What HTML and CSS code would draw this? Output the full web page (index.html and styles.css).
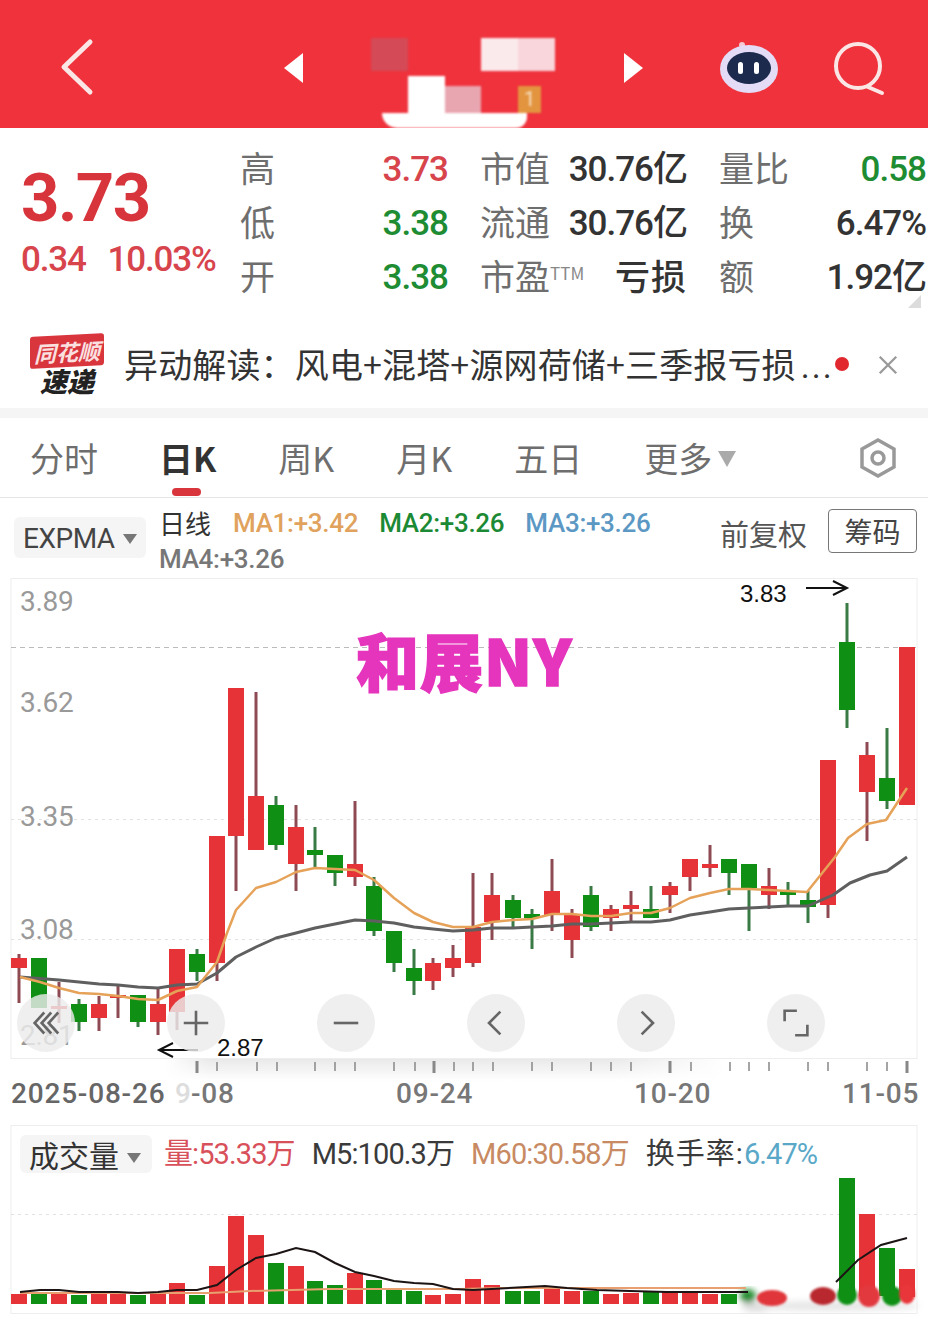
FILE: index.html
```html
<!DOCTYPE html>
<html lang="zh-CN">
<head>
  <meta charset="UTF-8">
  <meta name="viewport" content="width=device-width, initial-scale=1.0">
  <title>行情</title>
  <link rel="stylesheet" href="styles.css">
</head>
<body>

  <header class="topbar">
    <svg class="back-icon" viewBox="0 0 40 60"><path d="M32 4 L6 29 L32 54"/></svg>
    <div class="stock-switch">
      <span class="tri tri-left"></span>
      <div class="mosaic">
        <span class="m m1"></span><span class="m"></span><span class="m"></span><span class="m m2"></span><span class="m m3"></span>
        <span class="m"></span><span class="m m4"></span><span class="m m5"></span><span class="m"></span><span class="m m6">1</span>
        <span class="m-bottom"></span>
      </div>
      <span class="tri tri-right"></span>
    </div>
    <svg class="bot-icon" viewBox="0 0 60 52">
      <circle cx="23" cy="3" r="3" fill="#f6c8d4"/>
      <path d="M23 3 L27 9" stroke="#f6d8e0" stroke-width="2"/>
      <ellipse cx="30" cy="27" rx="29" ry="24" fill="#e4dcf6"/>
      <ellipse cx="30" cy="26" rx="22" ry="16" fill="#1c2a4e"/>
      <rect x="19" y="20" width="5" height="12" rx="2.5" fill="#fff"/>
      <rect x="35" y="20" width="5" height="12" rx="2.5" fill="#fff"/>
    </svg>
    <svg class="search-icon" viewBox="0 0 56 56"><circle cx="26" cy="25" r="22"/><path d="M36 46 L50 52"/></svg>
  </header>

  <section class="quote">
    <div class="price-box">
      <div class="price">3.73</div>
      <div class="change"><span>0.34</span><span>10.03%</span></div>
    </div>
    <div class="quote-grid">
      <div class="cell"><span class="lbl">高</span><span class="val red">3.73</span></div>
      <div class="cell"><span class="lbl">市值</span><span class="val">30.76亿</span></div>
      <div class="cell"><span class="lbl">量比</span><span class="val green">0.58</span></div>
      <div class="cell"><span class="lbl">低</span><span class="val green">3.38</span></div>
      <div class="cell"><span class="lbl">流通</span><span class="val">30.76亿</span></div>
      <div class="cell"><span class="lbl">换</span><span class="val">6.47%</span></div>
      <div class="cell"><span class="lbl">开</span><span class="val green">3.38</span></div>
      <div class="cell"><span class="lbl">市盈<sup class="ttm">TTM</sup></span><span class="val loss">亏损</span></div>
      <div class="cell"><span class="lbl">额</span><span class="val">1.92亿</span></div>
    </div>
    <span class="corner"></span>
  </section>

  <section class="news">
    <div class="news-logo">
      <div class="logo-top">同花顺</div>
      <div class="logo-bottom">速递</div>
    </div>
    <div class="news-text">异动解读：风电+混塔+源网荷储+三季报亏损<span class="dots">...</span></div>
    <span class="news-dot"></span>
    <svg class="news-close" viewBox="0 0 24 24"><path d="M3 3 L21 21 M21 3 L3 21"/></svg>
  </section>

  <nav class="tabs">
    <span class="tab">分时</span>
    <span class="tab active">日K</span>
    <span class="tab">周K</span>
    <span class="tab">月K</span>
    <span class="tab">五日</span>
    <span class="tab">更多<i class="caret caret-big"></i></span>
    <svg class="hex-icon" viewBox="0 0 40 40"><path d="M20 2 L36 11 V29 L20 38 L4 29 V11 Z"/><circle cx="20" cy="20" r="6"/></svg>
  </nav>

  <section class="indicators">
    <div class="pill pill-expma">EXPMA<i class="caret"></i></div>
    <div class="ma-list">
      <span class="ma-day">日线</span>
      <span class="ma ma1">MA1:+3.42</span>
      <span class="ma ma2">MA2:+3.26</span>
      <span class="ma ma3">MA3:+3.26</span>
      <span class="ma ma4">MA4:+3.26</span>
    </div>
    <span class="fq">前复权</span>
    <span class="chip">筹码</span>
  </section>

  <section class="chart">
    <svg class="chart-svg" viewBox="0 578 928 532" width="928" height="532">
      <defs>
        <linearGradient id="axisFade" x1="0" y1="0" x2="0" y2="1">
          <stop offset="0" stop-color="#e9e9e9"/>
          <stop offset="1" stop-color="#e9e9e9" stop-opacity="0"/>
        </linearGradient>
        <linearGradient id="axisEdge" x1="0" y1="0" x2="1" y2="0">
          <stop offset="0" stop-color="#000"/>
          <stop offset="0.08" stop-color="#fff"/>
          <stop offset="0.8" stop-color="#fff"/>
          <stop offset="1" stop-color="#000"/>
        </linearGradient>
        <mask id="axisMask" maskUnits="userSpaceOnUse" x="165" y="1059" width="560" height="22">
          <rect x="165" y="1059" width="560" height="22" fill="url(#axisEdge)"/>
        </mask>
      </defs>

      <rect x="165" y="1059" width="560" height="22" fill="url(#axisFade)" mask="url(#axisMask)"/>
      <rect class="frame" x="11" y="578.5" width="906" height="480"/>

      <path class="grid-dash" d="M11 647.5H917"/>
      <path class="grid-dot" d="M11 819.5H917M11 939.5H917"/>

      <text class="y-label" x="20" y="611">3.89</text>
      <text class="y-label" x="20" y="712">3.62</text>
      <text class="y-label" x="20" y="826">3.35</text>
      <text class="y-label" x="20" y="939">3.08</text>
      <text class="y-label" x="20" y="1045">2.81</text>

      <text class="watermark" x="356" y="686">和展NY</text>

      <path class="wick wick-up" d="M19 954V1003M59 982V1023M99 996V1031M118 986V1018M158 989V1035M177 1012V1030M217 963V981M236 836V891M256 692V796M296 805V891M355 801V886M433 958V990M453 945V977M473 873V967M492 873V940M552 859V931M572 909V958M611 905V931M631 891V922M670 882V913M690 877V891M710 845V877M769 868V909M828 905V918M867 742V841"/>
      <path class="wick wick-down" d="M79 999V1031M138 1022V1027M197 949V981M276 796V850M315 827V867M335 873V886M374 877V936M394 963V972M414 949V995M513 895V927M532 909V949M591 886V931M651 886V918M729 873V895M749 888V931M788 882V906M808 891V923M847 603V728M887 728V809"/>
      <path class="body-up" d="M11 958h16v10h-16zM51 1006h16v3h-16zM91 1004h16v14h-16zM110 995h16v3h-16zM150 1004h16v18h-16zM169 949h16v63h-16zM209 836h16v127h-16zM228 688h16v148h-16zM248 796h16v54h-16zM288 827h16v37h-16zM347 864h16v13h-16zM425 963h16v18h-16zM445 958h16v10h-16zM465 927h16v36h-16zM484 895h16v27h-16zM544 891h16v24h-16zM564 915h16v25h-16zM603 909h16v9h-16zM623 905h16v4h-16zM662 886h16v9h-16zM682 859h16v18h-16zM702 864h16v4h-16zM761 886h16v9h-16zM820 760h16v145h-16zM859 755h16v37h-16zM899 647h16v158h-16z"/>
      <path class="body-down" d="M31 958h16v50h-16zM71 1004h16v18h-16zM130 995h16v27h-16zM189 954h16v18h-16zM268 805h16v40h-16zM307 850h16v5h-16zM327 855h16v18h-16zM366 886h16v45h-16zM386 931h16v32h-16zM406 968h16v13h-16zM505 900h16v18h-16zM524 914h16v4h-16zM583 895h16v32h-16zM643 909h16v9h-16zM721 859h16v14h-16zM741 864h16v24h-16zM780 891h16v4h-16zM800 900h16v7h-16zM839 642h16v68h-16zM879 778h16v23h-16z"/>

      <polyline class="line-gray" points="20,977 59,980 79,982 99,984 118,985 138,987 158,988 177,985 197,984 217,973 236,957 256,947 276,938 296,933 315,928 335,924 355,920 374,921 394,923 414,927 433,929 453,931 473,930 492,928 513,928 532,927 552,926 572,924 591,924 611,923 631,922 651,922 670,920 690,915 710,912 729,909 749,908 769,907 788,906 808,906 833,895 850,883 870,875 887,871 907,857"/>
      <polyline class="line-orange" points="20,977 40,982 59,988 79,993 99,994 118,996 138,999 158,1000 177,991 197,987 217,962 227,933 236,910 256,888 276,882 296,872 315,868 335,869 355,870 374,880 394,898 414,913 433,922 453,927 473,927 492,922 513,920 532,919 552,914 572,914 591,916 611,916 631,913 651,913 670,908 690,898 710,893 729,889 749,889 769,890 788,891 807,892 835,857 848,838 867,824 886,820 907,788"/>

      <text class="note" x="740" y="602">3.83</text>
      <path class="note-arrow" d="M806 588H847M833 581L847 588L833 595"/>
      <text class="note" x="217" y="1056">2.87</text>
      <path class="note-arrow" d="M198 1050H159M173 1043L159 1050L173 1057"/>

      <path class="tick" d="M217 1062v9M257 1062v9M277 1062v9M315 1062v9M335 1062v9M355 1062v9M394 1062v9M415 1062v9M454 1062v9M473 1062v9M493 1062v9M532 1062v9M552 1062v9M591 1062v9M611 1062v9M631 1062v9M691 1062v9M730 1062v9M749 1062v9M769 1062v9M808 1062v9M828 1062v9M867 1062v9M887 1062v9"/>
      <path class="tick tick-major" d="M197 1061v12M434 1061v12M670 1061v12M907 1061v12"/>

      <text class="x-label x-first" x="11" y="1103">2025-08-26</text>
      <text class="x-label x-faded" x="175" y="1103">9</text>
      <text class="x-label" x="191" y="1103">-08</text>
      <text class="x-label" x="396" y="1103">09-24</text>
      <text class="x-label" x="634" y="1103">10-20</text>
      <text class="x-label" x="842" y="1103">11-05</text>
    </svg>

    <div class="chart-tools">
      <button class="tool"><svg viewBox="0 0 32 32"><path d="M14 4 L3 16 L14 28M22 4 L11 16 L22 28M30 4 L19 16 L30 28"/></svg></button>
      <button class="tool"><svg viewBox="0 0 32 32"><path d="M2 16H30M16 2V30"/></svg></button>
      <button class="tool"><svg viewBox="0 0 32 32"><path d="M2 16H30"/></svg></button>
      <button class="tool"><svg viewBox="0 0 32 32"><path d="M21 3 L8 16 L21 29"/></svg></button>
      <button class="tool"><svg viewBox="0 0 32 32"><path d="M11 3 L24 16 L11 29"/></svg></button>
      <button class="tool"><svg viewBox="0 0 32 32"><path d="M17 2H3V14M15 30H29V18"/></svg></button>
    </div>
  </section>

  <section class="volume">
    <div class="vol-head">
      <div class="pill pill-vol">成交量<i class="caret"></i></div>
      <span class="vol-item v-red">量:53.33万</span>
      <span class="vol-item v-dark">M5:100.3万</span>
      <span class="vol-item v-tan">M60:30.58万</span>
      <span class="vol-item v-dark v-turn">换手率:<span class="v-blue">6.47%</span></span>
    </div>
    <svg class="vol-svg" viewBox="0 1125 928 189" width="928" height="189">
      <defs><filter id="smear"><feGaussianBlur stdDeviation="3"/></filter></defs>
      <rect class="frame" x="11" y="1125.5" width="906" height="188"/>
      <path class="grid-dot" d="M11 1214.5H917"/>
      <path class="body-up" d="M11 1294h16v10h-16zM51 1294h16v10h-16zM91 1294h16v10h-16zM110 1294h16v10h-16zM150 1292h16v12h-16zM169 1283h16v21h-16zM209 1266h16v38h-16zM228 1216h16v88h-16zM248 1235h16v69h-16zM288 1266h16v38h-16zM347 1273h16v31h-16zM425 1295h16v9h-16zM445 1294h16v10h-16zM465 1279h16v25h-16zM484 1285h16v19h-16zM544 1288h16v16h-16zM564 1291h16v13h-16zM603 1294h16v10h-16zM623 1293h16v11h-16zM662 1292h16v12h-16zM682 1293h16v11h-16zM702 1294h16v10h-16zM859 1214h16v82h-16zM899 1269h16v28h-16z"/>
      <path class="body-down" d="M31 1292h16v12h-16zM71 1295h16v9h-16zM130 1295h16v9h-16zM189 1295h16v9h-16zM268 1263h16v41h-16zM307 1281h16v23h-16zM327 1285h16v19h-16zM366 1280h16v24h-16zM386 1289h16v15h-16zM406 1291h16v13h-16zM505 1291h16v13h-16zM524 1291h16v13h-16zM583 1291h16v13h-16zM643 1292h16v12h-16zM721 1294h16v10h-16zM839 1178h16v118h-16zM879 1248h16v48h-16z"/>
      <g filter="url(#smear)">
        <ellipse cx="830" cy="1306" rx="90" ry="5" fill="#e6e6e6"/>
        <ellipse cx="756" cy="1307" rx="14" ry="5" fill="#ddd"/>
        <ellipse cx="748" cy="1296" rx="8" ry="7" fill="#1a8a2a"/>
      </g>
      <ellipse class="blob" cx="772" cy="1298" rx="15" ry="8" fill="#e0353a"/>
      <ellipse class="blob" cx="823" cy="1296" rx="13" ry="9" fill="#b8282e"/>
      <circle class="blob" cx="847" cy="1295" r="10" fill="#0f9015"/>
      <circle class="blob" cx="869" cy="1296" r="11" fill="#e2393f"/>
      <circle class="blob" cx="892" cy="1296" r="10" fill="#0f9015"/>
      <ellipse class="blob" cx="907" cy="1294" rx="8" ry="10" fill="#e8363a"/>
      <polyline class="vol-ma60" points="20,1293 210,1293 250,1291 330,1289 460,1289 500,1288 746,1288"/>
      <polyline class="vol-ma5" points="20,1292 40,1290 59,1290 79,1292 99,1292 118,1292 138,1293 158,1292 177,1290 197,1290 217,1285 236,1270 256,1258 276,1254 296,1248 315,1252 335,1263 355,1272 374,1276 394,1281 414,1283 433,1284 453,1289 473,1290 545,1286 567,1288 597,1290 630,1291 667,1292 730,1292 748,1292"/>
      <polyline class="vol-ma5" points="836,1282 858,1260 881,1245 907,1238"/>
    </svg>
  </section>

</body>
</html>
```

FILE: styles.css
```css
body {
  margin: 0;
  width: 928px;
  height: 1322px;
  overflow: hidden;
  background-color: #fff;
  font-family: "Noto Sans CJK SC", "Noto Sans", sans-serif;
  color: #333;
}

/* top bar */
.topbar {
  height: 128px;
  background-color: #ef323c;
  display: flex;
  align-items: center;
  position: relative;
}
.back-icon {
  width: 40px;
  height: 60px;
  margin: 8px 0 0 58px;
  fill: none;
  stroke: #fbe6e6;
  stroke-width: 5;
  stroke-linecap: round;
  stroke-linejoin: round;
}
.stock-switch {
  display: flex;
  align-items: center;
  margin-left: 186px;
  height: 100%;
}
.tri {
  width: 0;
  height: 0;
  margin-top: 8px;
  border-top: 15px solid transparent;
  border-bottom: 15px solid transparent;
}
.tri-left { border-right: 19px solid #fff; }
.tri-right { border-left: 19px solid #fff; margin-left: 69px; }
.mosaic {
  width: 184px;
  height: 127px;
  margin-left: 68px;
  padding-top: 37px;
  box-sizing: border-box;
  display: grid;
  grid-template-columns: repeat(5, 36.8px);
  grid-template-rows: 33px 42px 15px;
  filter: blur(1.2px);
}
.m1 { background-color: #d44a56; }
.m2 { background-color: #fbeaec; }
.m3 { background-color: #f9d6dc; }
.m4 { background-color: #fff; margin-top: 5px; }
.m5 { background-color: #e8a6b0; margin-top: 15px; }
.m6 {
  background-color: #e3943f;
  margin-top: 15px;
  margin-right: 14px;
  color: #f6e2c4;
  font: 20px/27px "Roboto", sans-serif;
  text-align: center;
}
.m-bottom {
  grid-column: 1 / 6;
  margin: 0 28px 0 11px;
  background-color: #fff;
  border-radius: 0 0 22px 30px;
}
.bot-icon {
  width: 60px;
  height: 52px;
  position: absolute;
  left: 719px;
  top: 42px;
}
.search-icon {
  width: 56px;
  height: 56px;
  position: absolute;
  left: 832px;
  top: 41px;
  fill: none;
  stroke: #fbe6e6;
  stroke-width: 4;
  stroke-linecap: round;
}

/* quote */
.quote {
  height: 202px;
  display: flex;
  position: relative;
}
.price-box {
  width: 240px;
  padding-left: 21px;
  box-sizing: border-box;
}
.price {
  font: 700 67px/80px "Roboto", sans-serif;
  color: #d8343c;
  margin-top: 30px;
  letter-spacing: -1.5px;
}
.change {
  display: flex;
  gap: 22px;
  margin-top: 1px;
  font: 500 35px/42px "Roboto", sans-serif;
  color: #d8444c;
  letter-spacing: -1.2px;
}
.quote-grid {
  flex: 1;
  display: grid;
  grid-template-columns: 208px 207px 207px;
  column-gap: 32px;
  grid-auto-rows: 54px;
  margin-top: 13px;
}
.cell {
  display: flex;
  justify-content: space-between;
  align-items: center;
}
.lbl {
  font-size: 35px;
  color: #6e6e6e;
  line-height: 54px;
  margin-top: -3px;
  white-space: nowrap;
}
.ttm {
  font-size: 17px;
  line-height: 0;
  vertical-align: 10px;
  color: #888;
}
.val {
  font: 500 35px/54px "Roboto", "Noto Sans CJK SC", sans-serif;
  letter-spacing: -1px;
  color: #333;
  margin-top: 3px;
  white-space: nowrap;
}
.val.red { color: #d8444c; }
.val.green { color: #1e8c32; }
.val.loss {
  font-family: "Noto Sans CJK SC", sans-serif;
  font-size: 35px;
  font-weight: 500;
  letter-spacing: 1px;
  margin-top: -3px;
}
.corner {
  position: absolute;
  right: 7px;
  bottom: 22px;
  width: 0;
  height: 0;
  border-left: 13px solid transparent;
  border-bottom: 13px solid #dcdcdc;
}

/* news strip */
.news {
  height: 88px;
  box-sizing: border-box;
  padding-bottom: 8px;
  border-bottom: 10px solid #f5f5f5;
  display: flex;
  align-items: center;
}
.news-logo {
  width: 74px;
  margin-left: 30px;
  text-align: center;
  font-style: italic;
  font-weight: 700;
}
.logo-top {
  background-color: #d8353d;
  color: #fbe0e0;
  font-size: 22px;
  line-height: 32px;
  border-radius: 3px;
  transform: skewY(-3deg);
}
.logo-bottom {
  font-size: 27px;
  font-weight: 900;
  line-height: 28px;
  color: #222;
}
.news-text {
  margin-left: 20px;
  width: 708px;
  font-size: 34px;
  line-height: 44px;
  color: #333;
  letter-spacing: 0.15px;
  white-space: nowrap;
}
.dots {
  font-family: "Roboto", sans-serif;
  letter-spacing: 2px;
  margin-left: 5px;
}
.news-dot {
  width: 14px;
  height: 14px;
  border-radius: 50%;
  background-color: #e0282e;
  margin-left: 3px;
  margin-top: -3px;
}
.news-close {
  width: 22px;
  height: 22px;
  margin-left: 28px;
  fill: none;
  stroke: #999;
  stroke-width: 2.5;
}

/* tabs */
.tabs {
  height: 80px;
  border-bottom: 1px solid #e4e4e4;
  box-sizing: border-box;
  display: flex;
  align-items: center;
  padding-left: 30px;
  gap: 62px;
  position: relative;
}
.tab {
  font-size: 34px;
  color: #6e6e6e;
  position: relative;
  white-space: nowrap;
}
.tab.active {
  font-weight: 700;
  color: #333;
  margin-left: -1px;
}
.tab.active::after {
  content: "";
  position: absolute;
  left: 13px;
  bottom: -14px;
  width: 29px;
  height: 8px;
  border-radius: 4px;
  background-color: #d8353d;
}
.caret {
  display: inline-block;
  width: 0;
  height: 0;
  border-left: 7px solid transparent;
  border-right: 7px solid transparent;
  border-top: 10px solid #777;
  margin-left: 8px;
  vertical-align: 4px;
}
.caret-big {
  border-left-width: 9px;
  border-right-width: 9px;
  border-top: 16px solid #aaa;
  margin-left: 6px;
  vertical-align: 5px;
}
.hex-icon {
  position: absolute;
  left: 858px;
  top: 20px;
  width: 40px;
  height: 40px;
  fill: none;
  stroke: #999;
  stroke-width: 3.5;
}

/* indicator row */
.indicators {
  height: 80px;
  position: relative;
  display: flex;
  align-items: flex-start;
}
.pill {
  background-color: #f5f5f5;
  border-radius: 6px;
  white-space: nowrap;
}
.pill-expma {
  width: 132px;
  height: 41px;
  margin: 19px 0 0 14px;
  box-sizing: border-box;
  padding-left: 9px;
  font: 28px/44px "Roboto", sans-serif;
  letter-spacing: -0.5px;
  color: #444;
}
.ma-list {
  width: 540px;
  margin: 6px 0 0 13px;
  display: flex;
  flex-wrap: wrap;
  column-gap: 21px;
}
.ma-day {
  font-size: 26px;
  line-height: 38px;
  color: #333;
}
.ma {
  font: 500 26px/38px "Roboto", sans-serif;
  letter-spacing: -0.3px;
  white-space: nowrap;
}
.ma1 { color: #e0a25c; margin-left: 1px; }
.ma2 { color: #1c8a34; }
.ma3 { color: #5c98c4; }
.ma4 { color: #777; flex-basis: 100%; line-height: 34px; }
.fq {
  font-size: 29px;
  line-height: 40px;
  color: #555;
  margin: 15px 0 0 21px;
  white-space: nowrap;
}
.chip {
  width: 89px;
  height: 44px;
  box-sizing: border-box;
  border: 1px solid #777;
  border-radius: 4px;
  font-size: 28px;
  line-height: 42px;
  text-align: center;
  color: #444;
  margin: 11px 0 0 21px;
}

/* main chart */
.chart {
  height: 532px;
  position: relative;
}
.chart-svg, .vol-svg {
  display: block;
}
.frame {
  fill: none;
  stroke: #eeeeee;
}
.grid-dash {
  stroke: #bbb;
  stroke-dasharray: 5 4;
}
.grid-dot {
  stroke: #e2e2e2;
  stroke-dasharray: 3 4;
}
.y-label {
  font: 28px "Roboto", sans-serif;
  letter-spacing: -0.3px;
  fill: #999;
}
.watermark {
  font: 900 63px "Noto Sans CJK SC", sans-serif;
  letter-spacing: 1px;
  fill: #e535bd;
  stroke: #e535bd;
  stroke-width: 1.5;
}
.wick { fill: none; stroke-width: 3; }
.wick-up { stroke: #8e4a52; }
.wick-down { stroke: #3a7a44; }
.body-up { fill: #e63337; }
.body-down { fill: #0f9015; }
.line-gray {
  fill: none;
  stroke: #5f5f5f;
  stroke-width: 3;
  stroke-linejoin: round;
}
.line-orange {
  fill: none;
  stroke: #e5a258;
  stroke-width: 2.5;
  stroke-linejoin: round;
}
.note {
  font: 24px "Liberation Sans", sans-serif;
  fill: #111;
}
.note-arrow {
  fill: none;
  stroke: #111;
  stroke-width: 2;
}
.tick { stroke: #888; stroke-width: 1.5; }
.tick-major { stroke-width: 3; }
.x-label {
  font: 500 28px "Roboto", sans-serif;
  letter-spacing: 0.8px;
  fill: #777;
}
.x-first { fill: #666; }
.x-faded { fill: #ddd; }

.chart-tools {
  position: absolute;
  left: 17px;
  top: 416px;
  display: flex;
  gap: 92px;
}
.tool {
  width: 58px;
  height: 58px;
  padding: 0;
  border: none;
  border-radius: 50%;
  background-color: rgba(236, 236, 236, 0.82);
  display: flex;
  align-items: center;
  justify-content: center;
}
.tool svg {
  width: 28px;
  height: 28px;
  fill: none;
  stroke: #666;
  stroke-width: 3;
}

/* volume */
.volume {
  position: relative;
  margin-top: 15px;
}
.vol-head {
  position: absolute;
  left: 20px;
  top: 10px;
  display: flex;
  align-items: center;
  gap: 17px;
}
.pill-vol {
  width: 132px;
  height: 38px;
  box-sizing: border-box;
  padding-left: 9px;
  font-size: 30px;
  line-height: 38px;
  color: #333;
  margin-right: -5px;
}
.vol-item {
  font: 29px/38px "Roboto", "Noto Sans CJK SC", sans-serif;
  letter-spacing: -0.9px;
  white-space: nowrap;
}
.v-red { color: #d8505a; }
.v-dark { color: #3a3a3a; }
.v-tan { color: #c88a62; }
.v-blue { color: #5aa8c8; }
.v-turn { letter-spacing: 1px; }
.v-turn .v-blue { letter-spacing: -0.9px; }
.blob { filter: blur(1px); }
.vol-ma5 {
  fill: none;
  stroke: #1c1414;
  stroke-width: 2;
}
.vol-ma60 {
  fill: none;
  stroke: #e8a070;
  stroke-width: 2;
}
```
